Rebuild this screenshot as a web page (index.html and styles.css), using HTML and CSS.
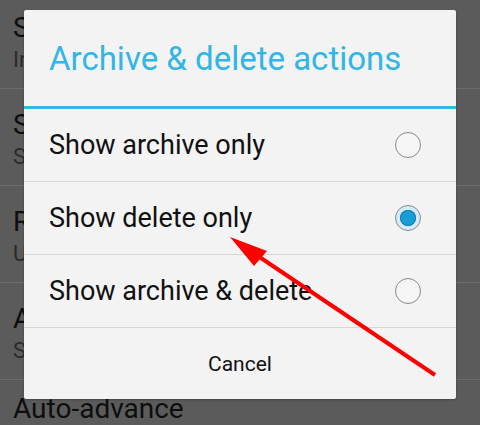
FILE: index.html
```html
<!DOCTYPE html>
<html>
<head>
<meta charset="utf-8">
<link rel="stylesheet" href="styles.css">
</head>
<body>
<div class="settings">
  <div class="pref"><div class="pt">Signature</div><div class="ps">Inbox type</div></div>
  <div class="pref"><div class="pt">Swipe to delete</div><div class="ps">Swipe items in list</div></div>
  <div class="pref"><div class="pt">Reply all</div><div class="ps">Use as default</div></div>
  <div class="pref"><div class="pt">Auto-fit messages</div><div class="ps">Shrink messages</div></div>
  <div class="pref single"><div class="pt">Auto-advance</div></div>
</div>
<div class="dialog">
  <div class="dtitle">Archive &amp; delete actions</div>
  <div class="options">
    <div class="opt"><span class="label">Show archive only</span><span class="radio"></span></div>
    <div class="opt"><span class="label">Show delete only</span><span class="radio on"></span></div>
    <div class="opt"><span class="label">Show archive &amp; delete</span><span class="radio"></span></div>
  </div>
  <div class="cancel">Cancel</div>
</div>
<svg class="arrow" width="480" height="425" viewBox="0 0 480 425">
  <line x1="435" y1="375" x2="252" y2="252" stroke="#ff0000" stroke-width="4"/>
  <polygon points="230,237 267,251 254,266" fill="#ff0000"/>
</svg>
</body>
</html>
```
FILE: styles.css
```css
html, body {
  margin: 0;
  padding: 0;
  width: 480px;
  height: 425px;
  overflow: hidden;
  background: #5b5b5b;
  font-family: Roboto, "Noto Sans", sans-serif;
}
.settings {
  display: flex;
  flex-direction: column;
  margin-top: -8px;
}
.pref {
  height: 97px;
  flex: none;
  border-bottom: 1px solid #6c6c6c;
  padding: 20px 13px 0;
  box-sizing: border-box;
  display: flex;
  flex-direction: column;
  white-space: nowrap;
}
.pref.single {
  padding-top: 13px;
  border-bottom: none;
}
.pt {
  font-size: 28px;
  color: #0e0e0e;
  line-height: 32px;
}
.ps {
  font-size: 22px;
  color: #2b2b2b;
  line-height: 28px;
  margin-top: 2px;
}
.dialog {
  position: absolute;
  left: 24px;
  top: 10px;
  width: 432px;
  height: 389px;
  background: #f3f3f3;
  border-radius: 2px;
  box-shadow: 0 1px 2px rgba(0,0,0,0.25);
  display: flex;
  flex-direction: column;
}
.dtitle {
  height: 99px;
  flex: none;
  box-sizing: border-box;
  border-bottom: 3px solid #33b5e5;
  color: #33b5e5;
  font-size: 33px;
  padding-left: 25px;
  display: flex;
  align-items: center;
}
.options {
  display: flex;
  flex-direction: column;
}
.opt {
  height: 73px;
  flex: none;
  box-sizing: border-box;
  border-bottom: 1px solid #d6d6d6;
  display: flex;
  align-items: center;
  justify-content: space-between;
  padding: 0 35px 0 25px;
}
.label {
  font-size: 27px;
  color: #111;
}
.radio {
  width: 26px;
  height: 26px;
  border: 1.5px solid #8a8a8a;
  border-radius: 50%;
  box-sizing: border-box;
  background: #f5f5f5;
  display: flex;
  align-items: center;
  justify-content: center;
}
.radio.on {
  background: #d3ebf5;
}
.radio.on::after {
  content: "";
  width: 16px;
  height: 16px;
  border-radius: 50%;
  background: #1a9dd6;
  box-shadow: inset 0 0 0 1px #1380b4;
}
.cancel {
  flex: 1;
  display: flex;
  align-items: center;
  justify-content: center;
  font-size: 21px;
  color: #111;
}
.arrow {
  position: absolute;
  left: 0;
  top: 0;
}
```
